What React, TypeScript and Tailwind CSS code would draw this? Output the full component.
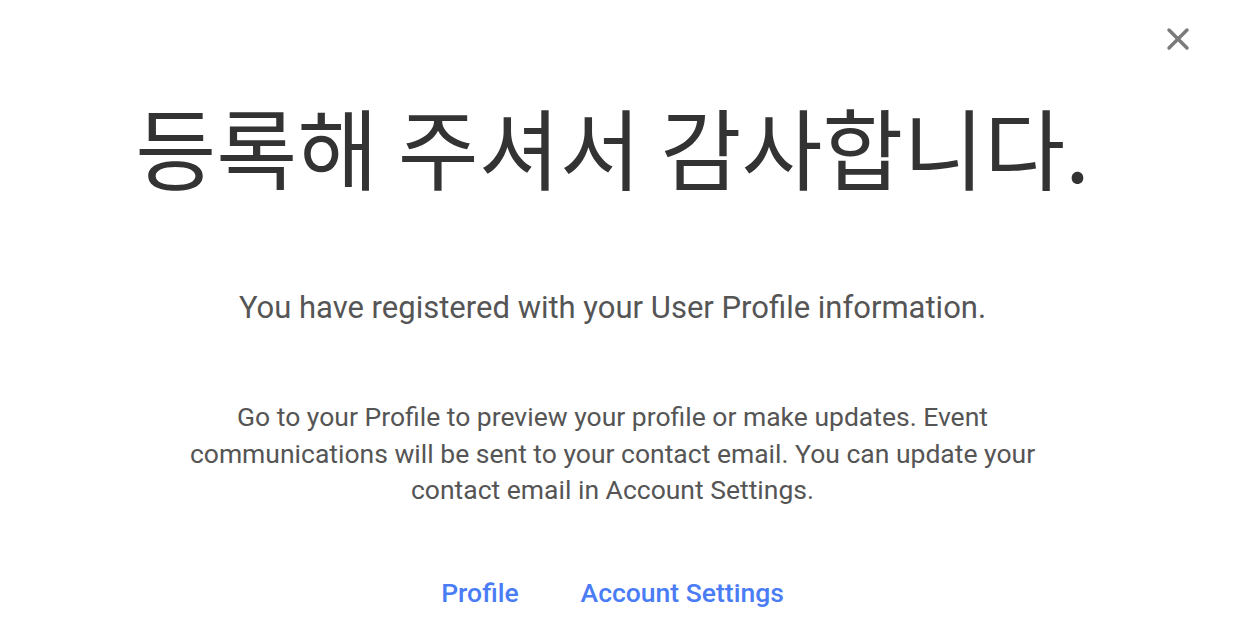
import { X } from "lucide-react"

export default function App() {
  return (
    <div className="relative w-full h-[640px] bg-white overflow-hidden" style={{ fontFamily: "Roboto, 'Noto Sans CJK KR', sans-serif" }}>
      {/* 닫기 버튼 */}
      <button className="absolute right-[37px] top-[21px] text-[#7a7a7a]">
        <X className="w-[36px] h-[36px]" strokeWidth={2.3} />
      </button>

      <div className="flex flex-col items-center pt-[90px] pr-[8px]">
        <h1
          className="text-[88px] leading-[110px] text-[#333333] font-normal"
          style={{ fontFamily: "'Noto Sans CJK KR', sans-serif" }}
        >
          등록해 주셔서 감사합니다.
        </h1>

        <p className="mt-[90px] text-[31px] leading-[36px] text-[#555555]">
          You have registered with your User Profile information.
        </p>

        <p className="mt-[73px] max-w-[890px] text-center text-[26.5px] leading-[36.5px] text-[#555555]">
          Go to your Profile to preview your profile or make updates. Event communications will be sent to your contact email. You can update your contact email in Account Settings.
        </p>

        <div className="mt-[68px] flex gap-[62px] text-[26.5px] leading-[32px] font-medium text-[#4a7cf5]">
          <a href="#">Profile</a>
          <a href="#">Account Settings</a>
        </div>
      </div>
    </div>
  )
}
